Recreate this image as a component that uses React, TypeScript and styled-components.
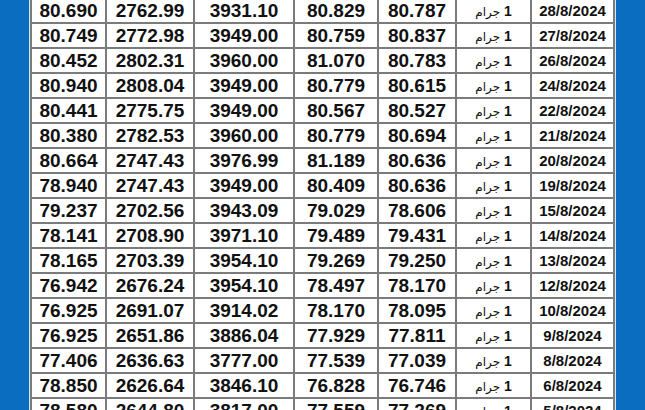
import styled, { createGlobalStyle } from 'styled-components'

const GlobalStyle = createGlobalStyle`
  html, body {
    margin: 0;
    padding: 0;
    background: #0b6dc0;
  }
`;

const Page = styled.div`
  width: 645px;
  height: 410px;
  overflow: hidden;
  background: #0b6dc0;
  display: flex;
  padding-left: 29px;
  box-sizing: border-box;
`;

const Frame = styled.div`
  margin-top: -3px;
  border-left: 1px solid #d8e6f3;
  border-right: 1px solid #d8e6f3;
  align-self: flex-start;
`;

const Table = styled.table`
  border-collapse: collapse;
  table-layout: fixed;
  width: 583px;
  background: #fff;
`;

const Row = styled.tr`
  height: 25px;
`;

const Cell = styled.td<{ $kind?: 'num' | 'unit' | 'date' }>`
  border: 2px solid #7b7b7b;
  padding: 0;
  text-align: center;
  vertical-align: middle;
  color: #111;
  font-family: "Liberation Sans", "DejaVu Sans", Arial, sans-serif;
  font-weight: bold;
  font-size: ${p => (p.$kind === 'date' ? '15px' : p.$kind === 'unit' ? '14px' : '19px')};
  line-height: 1;
  white-space: nowrap;
`;

const Arabic = styled.span`
  font-size: 12px;
  font-weight: normal;
`;

const widths = [75, 88, 100, 84, 78, 75, 83]

const rows: string[][] = [
  ['80.690', '2762.99', '3931.10', '80.829', '80.787', '28/8/2024'],
  ['80.749', '2772.98', '3949.00', '80.759', '80.837', '27/8/2024'],
  ['80.452', '2802.31', '3960.00', '81.070', '80.783', '26/8/2024'],
  ['80.940', '2808.04', '3949.00', '80.779', '80.615', '24/8/2024'],
  ['80.441', '2775.75', '3949.00', '80.567', '80.527', '22/8/2024'],
  ['80.380', '2782.53', '3960.00', '80.779', '80.694', '21/8/2024'],
  ['80.664', '2747.43', '3976.99', '81.189', '80.636', '20/8/2024'],
  ['78.940', '2747.43', '3949.00', '80.409', '80.636', '19/8/2024'],
  ['79.237', '2702.56', '3943.09', '79.029', '78.606', '15/8/2024'],
  ['78.141', '2708.90', '3971.10', '79.489', '79.431', '14/8/2024'],
  ['78.165', '2703.39', '3954.10', '79.269', '79.250', '13/8/2024'],
  ['76.942', '2676.24', '3954.10', '78.497', '78.170', '12/8/2024'],
  ['76.925', '2691.07', '3914.02', '78.170', '78.095', '10/8/2024'],
  ['76.925', '2651.86', '3886.04', '77.929', '77.811', '9/8/2024'],
  ['77.406', '2636.63', '3777.00', '77.539', '77.039', '8/8/2024'],
  ['78.850', '2626.64', '3846.10', '76.828', '76.746', '6/8/2024'],
  ['78.580', '2644.80', '3817.00', '77.559', '77.269', '5/8/2024'],
]

const App = () => {
  return (
    <Page>
      <GlobalStyle />
      <Frame>
        <Table>
          <colgroup>
            {widths.map((w, i) => <col key={i} style={{ width: w }} />)}
          </colgroup>
          <tbody>
            {rows.map(r => (
              <Row key={r[5]}>
                <Cell $kind="num">{r[0]}</Cell>
                <Cell $kind="num">{r[1]}</Cell>
                <Cell $kind="num">{r[2]}</Cell>
                <Cell $kind="num">{r[3]}</Cell>
                <Cell $kind="num">{r[4]}</Cell>
                <Cell $kind="unit" dir="rtl">1 <Arabic>جرام</Arabic></Cell>
                <Cell $kind="date">{r[5]}</Cell>
              </Row>
            ))}
          </tbody>
        </Table>
      </Frame>
    </Page>
  )
}

export default App
